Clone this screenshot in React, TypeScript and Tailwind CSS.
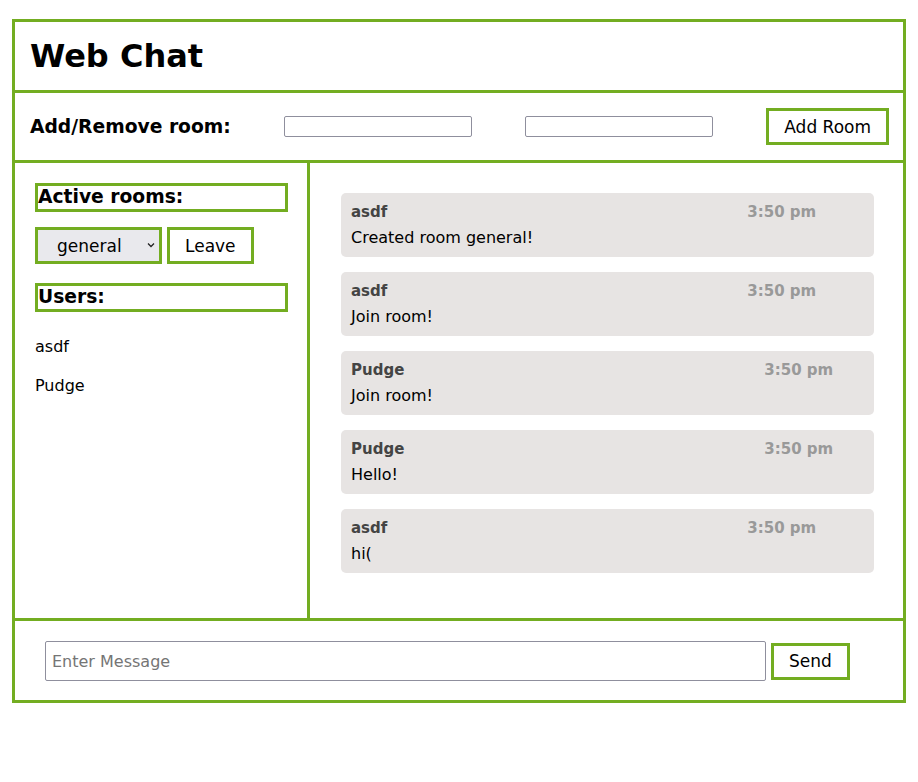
import React from "react";

const messages = [
  { name: "asdf", time: "3:50 pm", text: "Created room general!" },
  { name: "asdf", time: "3:50 pm", text: "Join room!" },
  { name: "Pudge", time: "3:50 pm", text: "Join room!" },
  { name: "Pudge", time: "3:50 pm", text: "Hello!" },
  { name: "asdf", time: "3:50 pm", text: "hi(" },
];

export default function App() {
  return (
    <div className="bg-white min-h-[782px] pt-[19px] pl-[12px] text-black" style={{ fontFamily: '"DejaVu Sans", sans-serif' }}>
      <div className="w-[894px] border-[3px] border-[#73AD21] box-border">
        {/* header */}
        <div className="h-[71px] border-b-[3px] border-[#73AD21] flex items-center px-[15px]">
          <h1 className="text-[32px] font-bold leading-none">Web Chat</h1>
        </div>
        {/* add/remove row */}
        <div className="h-[70px] border-b-[3px] border-[#73AD21] flex items-center justify-between pl-[15px] pr-[14px]">
          <h3 className="text-[18.72px] font-bold leading-[22px]">Add/Remove room:</h3>
          <input className="w-[188px] h-[21px] border border-[#8f8f9d] rounded-[2px] text-[13px] px-[2px]" />
          <input className="w-[188px] h-[21px] border border-[#8f8f9d] rounded-[2px] text-[13px] px-[2px]" />
          <button className="h-[37px] border-[3px] border-[#73AD21] px-[15px] text-[17px] leading-[20px] bg-white">Add Room</button>
        </div>
        {/* main */}
        <div className="h-[458px] border-b-[3px] border-[#73AD21] flex">
          <div className="w-[295px] border-r-[3px] border-[#73AD21] pt-[20px] pl-[20px] pr-[19px]">
            <h3 className="border-[3px] border-[#73AD21] h-[29px] text-[18.72px] font-bold leading-[22px]">Active rooms:</h3>
            <div className="flex gap-[5px] mt-[15px]">
              <div className="relative w-[127px] h-[37px]">
                <select
                  className="appearance-none w-[127px] h-[37px] border-[3px] border-[#73AD21] bg-[#e9e9ed] text-[17px] pl-[19px] pr-[20px] leading-[20px]"
                  defaultValue="general"
                >
                  <option value="general">general</option>
                </select>
                <svg
                  className="absolute left-[112px] top-[15px] pointer-events-none"
                  width="8"
                  height="6"
                  viewBox="0 0 8 6"
                  fill="none"
                  stroke="#222"
                  strokeWidth="1.3"
                >
                  <path d="M1 1.5 L4 4.5 L7 1.5" />
                </svg>
              </div>
              <button className="h-[37px] border-[3px] border-[#73AD21] px-[15px] text-[17px] leading-[20px] bg-white">Leave</button>
            </div>
            <h3 className="mt-[19px] border-[3px] border-[#73AD21] h-[29px] text-[18.72px] font-bold leading-[22px]">Users:</h3>
            <ul className="mt-[25px] flex flex-col gap-[19px] text-[16px] leading-[20px]">
              <li>asdf</li>
              <li>Pudge</li>
            </ul>
          </div>
          <div className="flex-1 pt-[30px] pl-[31px] pr-[29px] flex flex-col gap-[15px]">
            {messages.map((m, i) => (
              <div key={i} className="bg-[#e7e4e3] rounded-[5px] pt-[9px] pb-[9px] px-[10px]">
                <div className="text-[15px] font-bold leading-[20px] flex">
                  <span className="text-[#444]">{m.name}</span>
                  <span className="text-[#999] ml-[360px]">{m.time}</span>
                </div>
                <div className="mt-[6px] text-[16px] leading-[20px]">{m.text}</div>
              </div>
            ))}
          </div>
        </div>
        {/* footer */}
        <div className="h-[79px] flex items-center pl-[30px] gap-[5px] pt-[1px]">
          <input
            placeholder="Enter Message"
            className="w-[721px] h-[40px] border border-[#8f8f9d] rounded-[2px] px-[6px] text-[16px] placeholder:text-[#757575]"
          />
          <button className="h-[37px] border-[3px] border-[#73AD21] px-[15px] text-[17px] leading-[20px] bg-white">Send</button>
        </div>
      </div>
    </div>
  );
}
